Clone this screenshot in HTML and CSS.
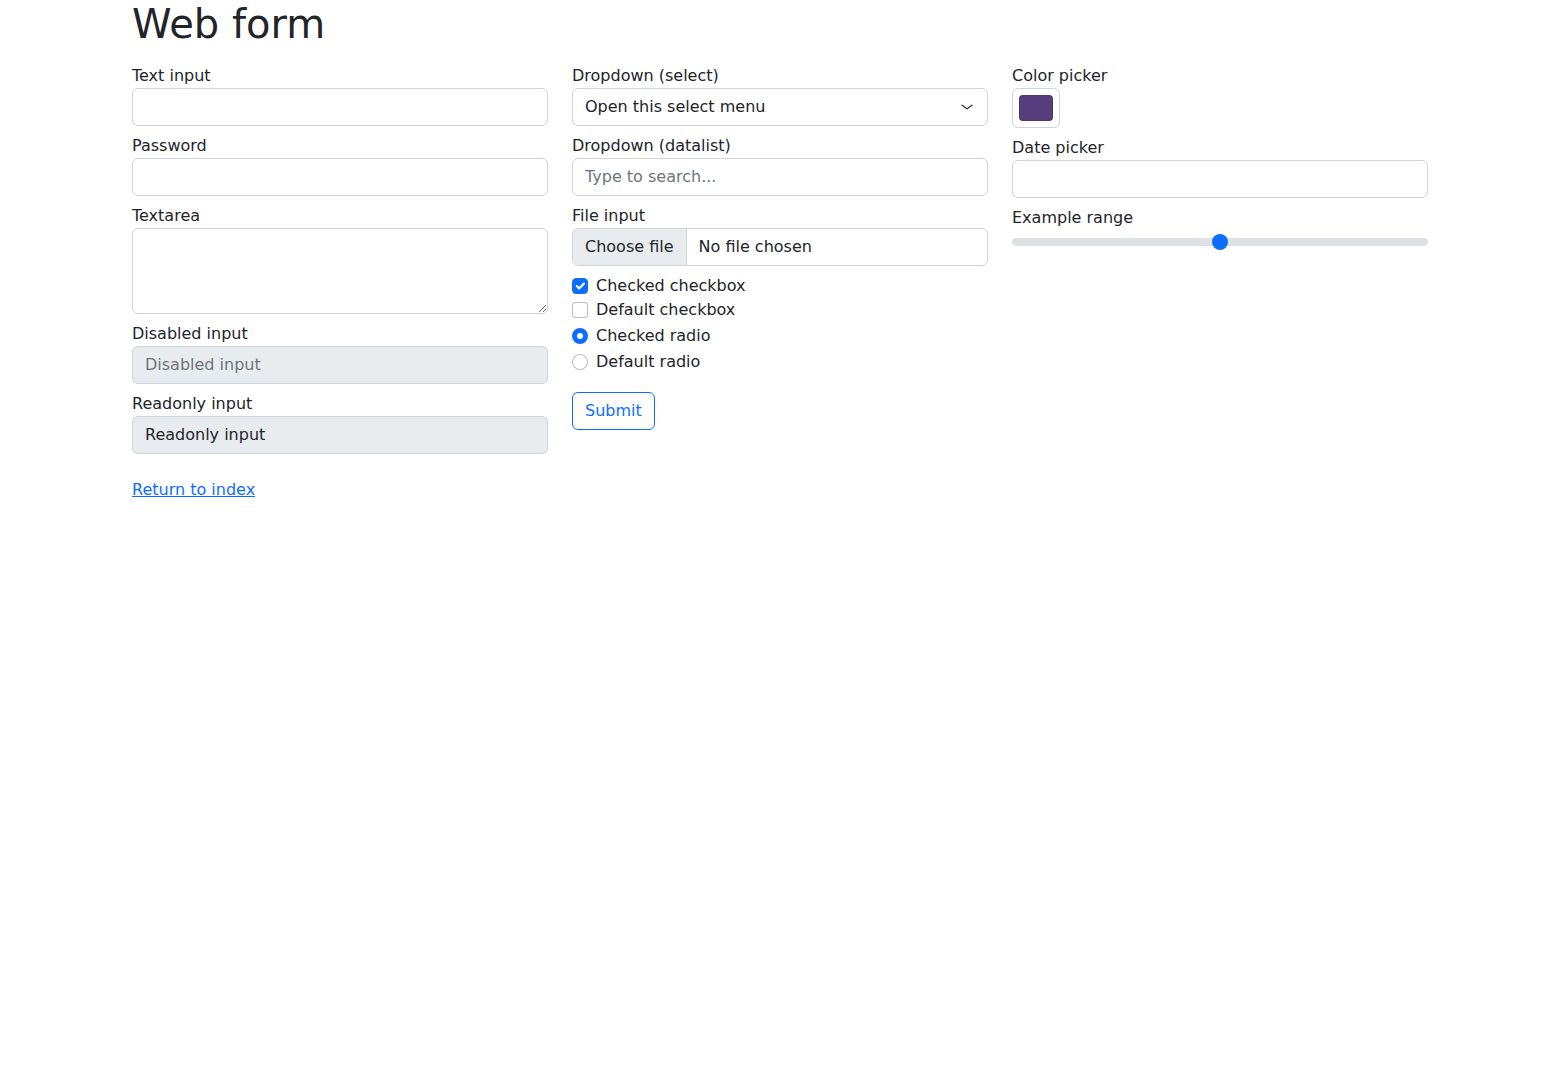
FILE: index.html
```html
<!DOCTYPE html>
<html lang="en">
<head>
<meta charset="utf-8">
<title>Web form</title>
<link rel="stylesheet" href="styles.css">
</head>
<body>
<main class="container">
  <h1 class="title">Web form</h1>
  <form class="form-grid">
    <div class="col">
      <label class="field">Text input
        <input type="text" class="control">
      </label>
      <label class="field">Password
        <input type="password" class="control">
      </label>
      <label class="field">Textarea
        <textarea class="control textarea" rows="3"></textarea>
      </label>
      <label class="field">Disabled input
        <input type="text" class="control" placeholder="Disabled input" disabled>
      </label>
      <label class="field">Readonly input
        <input type="text" class="control readonly" value="Readonly input" readonly>
      </label>
    </div>
    <div class="col">
      <label class="field">Dropdown (select)
        <span class="control select">Open this select menu
          <svg class="chevron" viewBox="0 0 16 16" width="16" height="12" preserveAspectRatio="none"><path d="m3 5.5 5 5 5-5" fill="none" stroke="#343a40" stroke-width="1.6" stroke-linecap="round" stroke-linejoin="round"/></svg>
        </span>
      </label>
      <label class="field">Dropdown (datalist)
        <input type="text" class="control" placeholder="Type to search...">
      </label>
      <label class="field">File input
        <span class="control file"><span class="file-btn">Choose file</span><span class="file-name">No file chosen</span></span>
      </label>
      <div class="checks">
        <label class="check"><span class="box box-checked"><svg viewBox="0 0 20 20" width="16" height="16"><path d="m6 10 3 3 6-6" fill="none" stroke="#fff" stroke-width="2.6" stroke-linecap="round" stroke-linejoin="round"/></svg></span>Checked checkbox</label>
        <label class="check"><span class="box"></span>Default checkbox</label>
      </div>
      <div class="radios">
        <label class="check"><span class="radio radio-checked"></span>Checked radio</label>
        <label class="check"><span class="radio"></span>Default radio</label>
      </div>
      <button type="button" class="btn">Submit</button>
    </div>
    <div class="col">
      <label class="field">Color picker
        <span class="color"><span class="swatch"></span></span>
      </label>
      <label class="field">Date picker
        <input type="text" class="control">
      </label>
      <label class="field">Example range
        <span class="range"><span class="track"></span><span class="thumb"></span></span>
      </label>
    </div>
  </form>
  <div class="footer"><a href="#" class="link">Return to index</a></div>
</main>
</body>
</html>
```

FILE: styles.css
```css
* { box-sizing: border-box; }
html, body { margin: 0; padding: 0; background: #fff; }
body {
  font-family: "DejaVu Sans", "Liberation Sans", sans-serif;
  font-size: 16px;
  line-height: 24px;
  color: #212529;
}
.container {
  width: 1320px;
  margin: 0 auto;
  padding: 0 12px;
}
.title {
  margin: 0 0 8px;
  font-size: 40px;
  line-height: 48px;
  font-weight: 400;
}
.form-grid {
  display: grid;
  grid-template-columns: repeat(3, 1fr);
  column-gap: 24px;
}
.col {
  padding: 8px 0;
  display: flex;
  flex-direction: column;
  align-items: flex-start;
}
.field {
  display: block;
  width: 100%;
  margin-bottom: 8px;
}
.control {
  display: block;
  width: 100%;
  height: 38px;
  padding: 5px 12px 7px;
  font: inherit;
  line-height: 24px;
  color: #212529;
  background: #fff;
  border: 1px solid #ced4da;
  border-radius: 6px;
  margin: 0;
  outline: none;
}
.control::placeholder { color: #6c757d; opacity: 1; }
.control:disabled, .control.readonly {
  background: #e9ecef;
}
.control:disabled::placeholder { color: #6c757d; }
.textarea {
  height: 86px;
  resize: vertical;
}
.select {
  position: relative;
  padding: 6px 36px 6px 12px;
}
.chevron {
  position: absolute;
  right: 12px;
  top: 12px;
}
.file {
  display: flex;
  padding: 0;
  overflow: hidden;
}
.file-btn {
  background: #e9ecef;
  padding: 6px 12px;
  border-right: 1px solid #ced4da;
}
.file-name {
  padding: 6px 12px;
}
.checks { width: 100%; margin-bottom: 2px; }
.radios { width: 100%; margin-bottom: 16px; }
.check {
  display: flex;
  align-items: flex-start;
  height: 24px;
  margin-bottom: 0;
}
.radios .check { margin-bottom: 2px; }
.box, .radio {
  flex: none;
  width: 16px;
  height: 16px;
  margin-top: 4px;
  margin-right: 8px;
  border: 1px solid rgba(0,0,0,.25);
  background: #fff;
}
.box { border-radius: 4px; position: relative; }
.box svg { position: absolute; left: -1px; top: -1px; }
.box-checked { background: #0d6efd; border-color: #0d6efd; }
.radio { border-radius: 50%; }
.radio-checked { border: 5px solid #0d6efd; }
.btn {
  font: inherit;
  line-height: 24px;
  padding: 6px 12px;
  color: #0d6efd;
  background: #fff;
  border: 1px solid #0d6efd;
  border-radius: 6px;
  margin: 0;
}
.color {
  display: block;
  width: 48px;
  height: 40px;
  padding: 6px;
  border: 1px solid #ced4da;
  border-radius: 6px;
}
.swatch {
  display: block;
  width: 100%;
  height: 100%;
  background: #563d7c;
  border-radius: 4px;
  box-shadow: inset 0 0 0 1px rgba(0,0,0,.12);
}
.range {
  display: flex;
  align-items: center;
  position: relative;
  width: 100%;
  height: 24px;
}
.track {
  display: block;
  width: 100%;
  height: 8px;
  background: #dee2e6;
  border-radius: 16px;
}
.thumb {
  position: absolute;
  left: 200px;
  top: 4px;
  width: 16px;
  height: 16px;
  border-radius: 50%;
  background: #0d6efd;
}
.footer { padding: 8px 0; }
.link { color: #0d6efd; text-decoration: underline; }
```
